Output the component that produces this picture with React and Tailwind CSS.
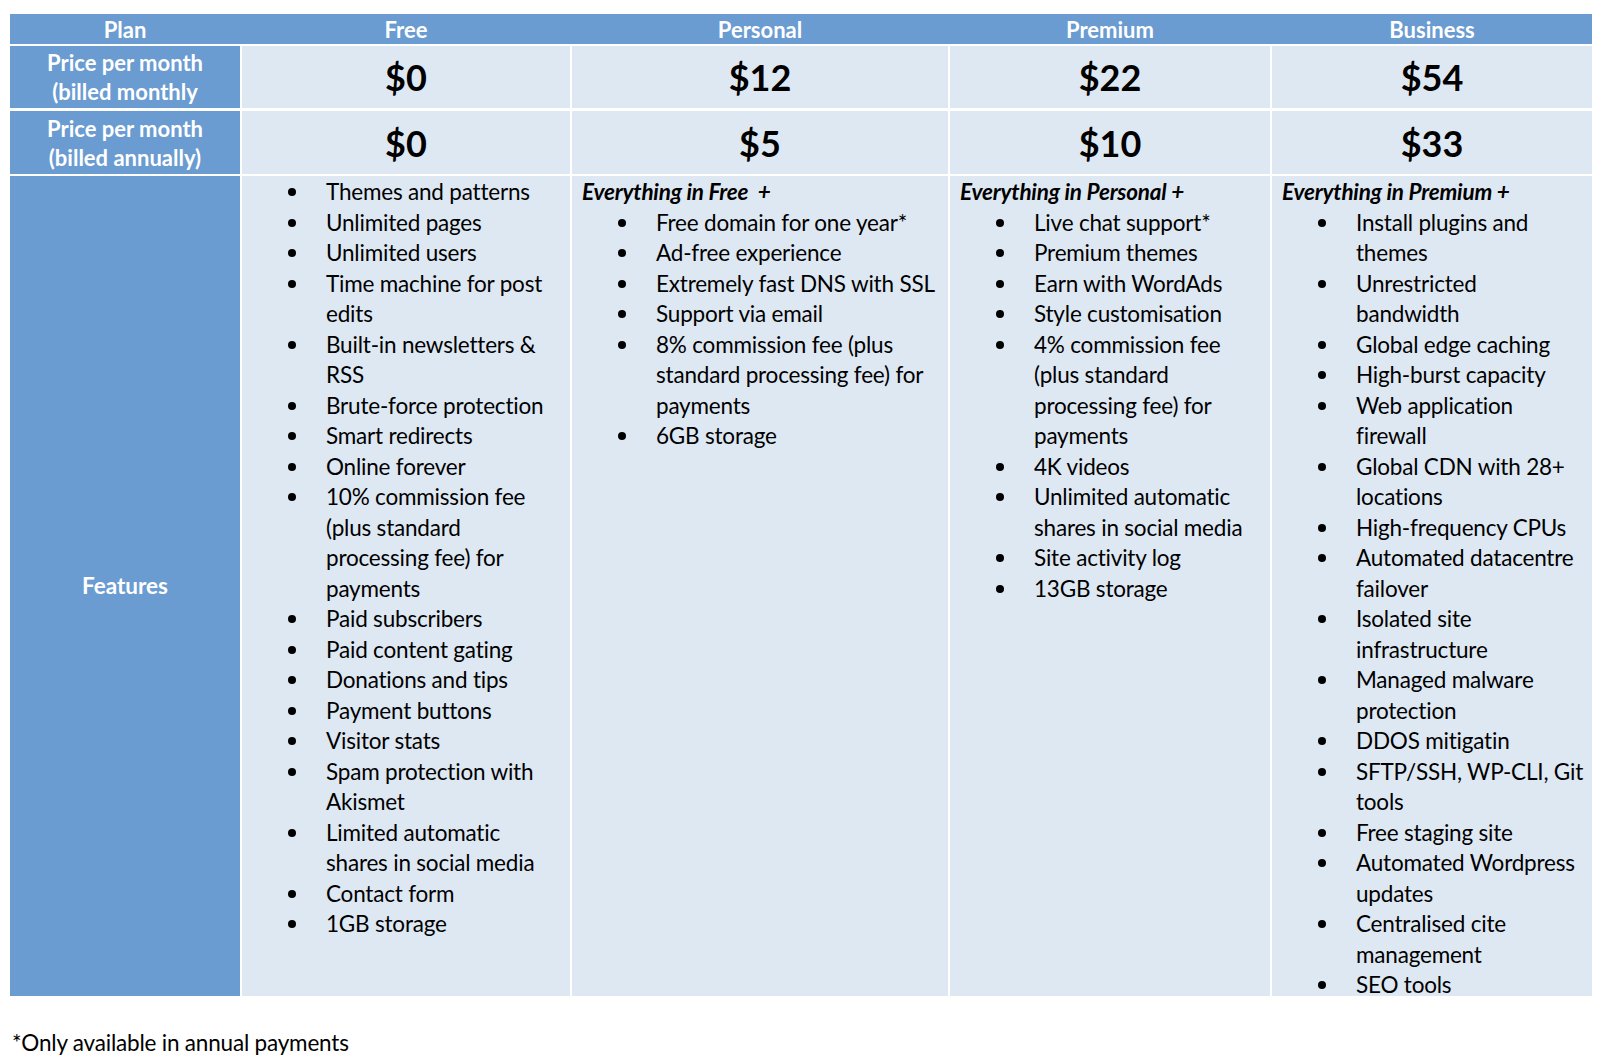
import React from "react";

const plans = [
  { name: "Free", monthly: "$0", annual: "$0", w: "w-[328px]" },
  { name: "Personal", monthly: "$12", annual: "$5", w: "w-[376px]" },
  { name: "Premium", monthly: "$22", annual: "$10", w: "w-[320px]" },
  { name: "Business", monthly: "$54", annual: "$33", w: "w-[320px]" },
];

// each feature is a list of lines, wrapped the same way as the original table
const features = [
  {
    heading: null,
    items: [
      ["Themes and patterns"],
      ["Unlimited pages"],
      ["Unlimited users"],
      ["Time machine for post", "edits"],
      ["Built-in newsletters &", "RSS"],
      ["Brute-force protection"],
      ["Smart redirects"],
      ["Online forever"],
      ["10% commission fee", "(plus standard", "processing fee) for", "payments"],
      ["Paid subscribers"],
      ["Paid content gating"],
      ["Donations and tips"],
      ["Payment buttons"],
      ["Visitor stats"],
      ["Spam protection with", "Akismet"],
      ["Limited automatic", "shares in social media"],
      ["Contact form"],
      ["1GB storage"],
    ],
  },
  {
    heading: "Everything in Free\u00a0 +",
    items: [
      ["Free domain for one year*"],
      ["Ad-free experience"],
      ["Extremely fast DNS with SSL"],
      ["Support via email"],
      ["8% commission fee (plus", "standard processing fee) for", "payments"],
      ["6GB storage"],
    ],
  },
  {
    heading: "Everything in Personal +",
    items: [
      ["Live chat support*"],
      ["Premium themes"],
      ["Earn with WordAds"],
      ["Style customisation"],
      ["4% commission fee", "(plus standard", "processing fee) for", "payments"],
      ["4K videos"],
      ["Unlimited automatic", "shares in social media"],
      ["Site activity log"],
      ["13GB storage"],
    ],
  },
  {
    heading: "Everything in Premium +",
    items: [
      ["Install plugins and", "themes"],
      ["Unrestricted", "bandwidth"],
      ["Global edge caching"],
      ["High-burst capacity"],
      ["Web application", "firewall"],
      ["Global CDN with 28+", "locations"],
      ["High-frequency CPUs"],
      ["Automated datacentre", "failover"],
      ["Isolated site", "infrastructure"],
      ["Managed malware", "protection"],
      ["DDOS mitigatin"],
      ["SFTP/SSH, WP-CLI, Git", "tools"],
      ["Free staging site"],
      ["Automated Wordpress", "updates"],
      ["Centralised cite", "management"],
      ["SEO tools"],
    ],
  },
];

function FeatureList({ heading, items }) {
  return (
    <div className="pt-[1px] text-[22.5px] leading-[30.5px] tracking-[-0.2px]">
      {heading && <div className="pl-[10px] font-bold italic whitespace-pre">{heading}</div>}
      {items.map((lines, i) => (
        <div key={i} className="flex">
          <div className="w-[84px] h-[30.5px] shrink-0 flex items-center pl-[46px]">
            <span className="w-[8px] h-[8px] rounded-full bg-black" />
          </div>
          <div>
            {lines.map((line, j) => (
              <div key={j} className="whitespace-nowrap">
                {line}
              </div>
            ))}
          </div>
        </div>
      ))}
    </div>
  );
}

export default function App() {
  return (
    <div className="w-[1612px] h-[1058px] bg-white pl-[10px] pt-[14px] font-['Lato',sans-serif] text-black">
      <div className="w-[1582px]">
        {/* header row */}
        <div className="flex gap-[2px] h-[30px] bg-[#6a9bd1] text-white font-bold text-[22px] items-center">
          <div className="w-[230px] text-center">Plan</div>
          {plans.map((p) => (
            <div key={p.name} className={`${p.w} text-center`}>
              {p.name}
            </div>
          ))}
        </div>

        {/* billed monthly */}
        <div className="mt-[2px] flex gap-[2px] h-[62px]">
          <div className="w-[230px] bg-[#6a9bd1] text-white font-bold text-[22px] leading-[29px] flex items-center justify-center text-center">
            Price per month
            <br />
            (billed monthly
          </div>
          {plans.map((p) => (
            <div key={p.name} className={`${p.w} bg-[#dee8f3] flex items-center justify-center text-[36px] font-bold`}>
              {p.monthly}
            </div>
          ))}
        </div>

        {/* billed annually */}
        <div className="mt-[3px] flex gap-[2px] h-[63px]">
          <div className="w-[230px] bg-[#6a9bd1] text-white font-bold text-[22px] leading-[29px] flex items-center justify-center text-center">
            Price per month
            <br />
            (billed annually)
          </div>
          {plans.map((p) => (
            <div key={p.name} className={`${p.w} bg-[#dee8f3] flex items-center justify-center text-[36px] font-bold`}>
              {p.annual}
            </div>
          ))}
        </div>

        {/* features */}
        <div className="mt-[2px] flex gap-[2px] h-[820px]">
          <div className="w-[230px] bg-[#6a9bd1] text-white font-bold text-[22.5px] flex items-center justify-center">
            Features
          </div>
          {plans.map((p, i) => (
            <div key={p.name} className={`${p.w} bg-[#dee8f3] overflow-visible`}>
              <FeatureList {...features[i]} />
            </div>
          ))}
        </div>
      </div>

      <p className="mt-[32px] pl-[2px] text-[22.5px] leading-[30.5px] tracking-[-0.2px]">*Only available in annual payments</p>
    </div>
  );
}
